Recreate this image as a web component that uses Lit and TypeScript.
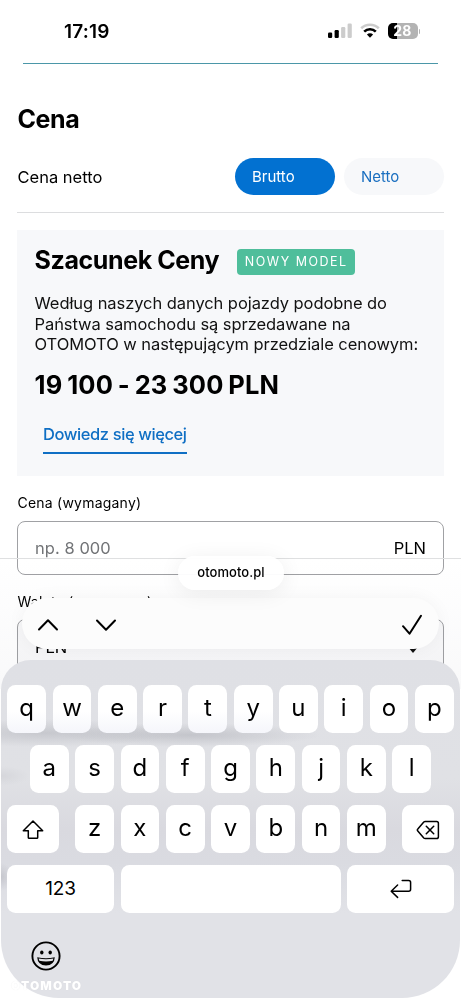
import { LitElement, html, svg, css } from "lit";
import { customElement, state } from "lit/decorators.js";
import { classMap } from "lit/directives/class-map.js";

@customElement("status-bar")
class StatusBar extends LitElement {
  static styles = css`
    :host { display: flex; justify-content: space-between; align-items: center; height: 63px; padding: 0 41px 0 64px; box-sizing: border-box; }
    .time { font-weight: 600; font-size: 19px; letter-spacing: 0.2px; line-height: 22px; }
    .icons { display: flex; align-items: center; gap: 8px; margin-top: -1px; }
    svg { display: block; }
    .battery { display: flex; align-items: center; gap: 1px; }
    .cell { width: 30px; height: 16px; border-radius: 5px; background: linear-gradient(to right, #000 9px, #b3b3b3 9px); color: #fff; font-size: 14px; font-weight: 700; line-height: 16.5px; text-align: center; letter-spacing: 0.2px; }
    .nub { width: 1.5px; height: 5px; border-radius: 0 2px 2px 0; background: #b3b3b3; }
  `;
  render() {
    return html`
      <span class="time">17:19</span>
      <div class="icons">
        <svg width="24" height="16" viewBox="0 0 24 16">
          <rect x="0" y="9.5" width="4.2" height="5.5" rx="1.2" />
          <rect x="6.6" y="7" width="4.2" height="8" rx="1.2" />
          <rect x="13.1" y="4" width="4.2" height="11" rx="1.2" fill="#ccc" />
          <rect x="19.6" y="0.5" width="4.2" height="14.5" rx="1.2" fill="#ccc" />
        </svg>
        <svg width="20" height="16" viewBox="0 0 20 16" fill="none">
          <path d="M1.2 5.3a12.6 12.6 0 0 1 17.6 0" stroke="#ccc" stroke-width="2.6" />
          <path d="M4.2 8.6a8.3 8.3 0 0 1 11.6 0" stroke="#000" stroke-width="2.6" />
          <path d="M6.9 11.5a4.4 4.4 0 0 1 6.2 0L10 14.8z" fill="#000" />
        </svg>
        <div class="battery"><div class="cell">28</div><div class="nub"></div></div>
      </div>`;
  }
}

@customElement("price-estimate")
class PriceEstimate extends LitElement {
  static styles = css`
    :host { display: block; height: 246px; padding: 14px 17.5px 0; box-sizing: border-box; background: #f7f8fa; }
    .head { display: flex; align-items: center; gap: 18px; height: 32px; }
    h2 { margin: 0; font-size: 25px; line-height: 30px; font-weight: 700; letter-spacing: -0.4px; white-space: nowrap; }
    .badge { margin-top: 3px; width: 118px; height: 26px; box-sizing: border-box; border-radius: 4px; background: #4fbe9b; color: #fff; font-size: 12.5px; line-height: 26px; letter-spacing: 1.5px; text-align: center; white-space: nowrap; }
    p { margin: 17px 0 0; font-size: 16.5px; line-height: 20.5px; color: #111; letter-spacing: -0.07px; white-space: nowrap; }
    .range { margin-top: 14px; font-size: 25.5px; line-height: 31px; font-weight: 700; letter-spacing: 0.15px; word-spacing: -1.4px; white-space: nowrap; }
    .link { display: inline-block; margin: 24px 0 0 8.5px; width: 144px; height: 30px; box-sizing: border-box; border-bottom: 2px solid #0f6fc4; color: #0f6fc4; font-size: 16.5px; line-height: 21px; font-weight: 500; letter-spacing: -0.41px; white-space: nowrap; }
  `;
  render() {
    return html`
      <div class="head"><h2>Szacunek Ceny</h2><span class="badge">NOWY MODEL</span></div>
      <p>
        Według naszych danych pojazdy podobne do<br />
        Państwa samochodu są sprzedawane na<br />
        OTOMOTO w następującym przedziale cenowym:
      </p>
      <div class="range">19 100 - 23 300 PLN</div>
      <a class="link">Dowiedz się więcej</a>`;
  }
}

const shiftIcon = svg`<svg width="24" height="22" viewBox="0 0 24 22"><path d="M12 2 2.3 11.8h5v6.6q0 .8.8.8h7.8q.8 0 .8-.8v-6.6h5z"/></svg>`;
const deleteIcon = svg`<svg width="24" height="20" viewBox="0 0 24 20"><path d="M9.2 1.4h11.4q1.8 0 1.8 1.8v13.6q0 1.8-1.8 1.8H9.2q-.8 0-1.4-.6L1.8 11q-.9-1 0-2l6-7q.6-.6 1.4-.6zM10.3 6.3l7.4 7.4M17.7 6.3l-7.4 7.4"/></svg>`;
const returnIcon = svg`<svg width="24" height="20" viewBox="0 0 24 20"><path d="M13.2 1.6h6.4q2 0 2 2v6.6q0 2-2 2H2.2M8.6 6l-6.4 6.2 6.4 6.2"/></svg>`;

@customElement("touch-keyboard")
class TouchKeyboard extends LitElement {
  static styles = css`
    :host { display: flex; flex-direction: column; gap: 12px; box-sizing: border-box; padding: 25px 6px 0; border-radius: 30px 30px 58px 58px; overflow: hidden; color: #000;
      background:
        radial-gradient(ellipse 130px 14px at 45px 73px, rgba(120,122,132,.24), transparent),
        radial-gradient(ellipse 130px 12px at 190px 75px, rgba(120,122,132,.27), transparent),
        radial-gradient(ellipse 28px 10px at 0 116px, rgba(150,150,160,.15), transparent),
        radial-gradient(ellipse 12px 14px at 0 217px, rgba(120,120,130,.22), transparent),
        linear-gradient(#dfe0e5, #e0e1e5 35%, #d9d9df 50%, #dadbe1 60%, #e1e2e7 75%); }
    .row { display: flex; justify-content: center; gap: 6.5px; }
    .key { width: 38.8px; height: 48px; border-radius: 8.5px; background: #fff; display: flex; align-items: center; justify-content: center; font-size: 24px; line-height: 30px; padding-bottom: 3px; box-sizing: border-box; }
    .side { width: 52.3px; padding: 2px 0 0; }
    .wide { width: 107px; padding: 0; font-size: 19px; }
    .space { width: 220px; }
    .letters { display: flex; gap: 6.5px; margin: 0 9.3px; }
    .key svg { fill: none; stroke: #000; stroke-width: 1.5; stroke-linecap: round; stroke-linejoin: round; }
    .num { font-size: 19px; letter-spacing: -0.2px; padding-bottom: 1px; }
    .shade { background: linear-gradient(#fff 55%, #f5f6fb); }
    .foot { padding: 16px 0 0 23.5px; }
    .foot svg { display: block; }
  `;
  keys(letters: string, shaded = 0) {
    return [...letters].map((l, i) => html`<div class=${classMap({ key: true, shade: i < shaded })}>${l}</div>`);
  }
  render() {
    return html`
      <div class="row">${this.keys("qwertyuiop", 6)}</div>
      <div class="row">${this.keys("asdfghjkl")}</div>
      <div class="row">
        <div class="key side">${shiftIcon}</div>
        <div class="letters">${this.keys("zxcvbnm")}</div>
        <div class="key side">${deleteIcon}</div>
      </div>
      <div class="row">
        <div class="key wide num">123</div>
        <div class="key space"></div>
        <div class="key wide">${returnIcon}</div>
      </div>
      <div class="foot">
        <svg width="30" height="30" viewBox="0 0 30 30">
          <circle cx="15" cy="15" r="13.6" fill="none" stroke="#000" stroke-width="1.9" />
          <ellipse cx="10.8" cy="11.6" rx="1.7" ry="2" /><ellipse cx="19.2" cy="11.6" rx="1.7" ry="2" />
          <path d="M6.2 16.2q8.8 2 17.6 0-.5 8.2-8.8 8.2t-8.8-8.2z" />
          <path d="M7.6 17.6q7.4 1.5 14.8 0l-.7 2.2q-6.7 1.5-13.4 0z" fill="#e1e2e7" />
        </svg>
      </div>`;
  }
}

@customElement("app-root")
class AppRoot extends LitElement {
  static styles = css`
    :host { display: block; position: relative; width: 461px; height: 999px; overflow: hidden; background: #fff; color: #000; font-family: Inter, "Liberation Sans", sans-serif; }
    .topline { height: 1px; margin: 0 23px; background: #4b97a8; }
    main { padding: 40px 17px 0; }
    h1 { margin: 0 0 0 0.5px; font-size: 25px; line-height: 30px; font-weight: 700; letter-spacing: -0.4px; }
    .tax { display: flex; align-items: center; height: 37px; margin-top: 24px; padding-bottom: 17px; border-bottom: 1px solid #dcdddf; font-size: 16.5px; }
    .tax .name { flex: 1; padding-left: 0.5px; }
    .opt { width: 100px; height: 37px; line-height: 37px; box-sizing: border-box; padding-left: 17px; border-radius: 18.5px; margin-left: 9px; font-size: 15px; background: #f7f8fa; color: #1a6fc0; }
    .opt.on { background: #0271d1; color: #fff; }
    price-estimate { margin-top: 17px; }
    .label { font-size: 14px; line-height: 18px; letter-spacing: 0.22px; padding-left: 0.5px; white-space: nowrap; }
    .first { margin-top: 18px; }
    .field { display: flex; justify-content: space-between; align-items: center; height: 54px; box-sizing: border-box; border: 1px solid #a0a1a4; border-radius: 8px; padding: 0 17px; font-size: 16.5px; }
    .first + .field { margin-top: 8.5px; }
    .second { margin-top: 18px; }
    .second + .field { margin-top: 8.5px; padding-top: 1px; background: #f9f9fa; }
    .hint { color: #727477; letter-spacing: 0.05px; }
    .caret { width: 0; border: 5px solid transparent; border-top: 6px solid #111; border-bottom: 0; margin-right: 8px; margin-top: 6px; }
    .haze { position: absolute; left: 0; right: 0; top: 559px; height: 130px; mix-blend-mode: multiply; background: linear-gradient(#fff, #f9f9fa); }
    .edge { position: absolute; left: 0; right: 0; top: 558px; height: 1px; background: #dfe0e1; }
    .site { position: absolute; left: 178px; top: 556px; width: 106px; height: 34px; border-radius: 17px; background: rgba(255,255,255,.96); box-shadow: 0 3px 22px rgba(0,0,0,.07); font-size: 13px; font-weight: 500; line-height: 33px; text-align: center; letter-spacing: .05px; }
    .tools { position: absolute; left: 22px; top: 598px; width: 417px; height: 51px; box-sizing: border-box; border-radius: 26px; background: #fcfcfc; box-shadow: 0 0 18px rgba(0,0,0,.045); display: flex; align-items: center; padding: 2px 15px 0 14px; }
    .tools svg { fill: none; stroke: #000; stroke-width: 2; stroke-linecap: round; stroke-linejoin: round; }
    .tools .down { margin-left: 34px; }
    .tools .done { margin-left: auto; }
    touch-keyboard { position: absolute; left: 1px; top: 660px; width: 459px; height: 338px; }
    .mark { position: absolute; left: 11px; top: 978px; color: #fff; font-size: 12px; line-height: 15px; font-weight: 900; letter-spacing: 1.1px; text-shadow: 0 0 1px rgba(0,0,0,.08); }
  `;
  @state() private mode = "Brutto";
  render() {
    return html`
      <status-bar></status-bar>
      <div class="topline"></div>
      <main>
        <h1>Cena</h1>
        <div class="tax">
          <span class="name">Cena netto</span>
          ${["Brutto", "Netto"].map((m) => html`<span class=${classMap({ opt: true, on: m === this.mode })} @click=${() => (this.mode = m)}>${m}</span>`)}
        </div>
        <price-estimate></price-estimate>
        <div class="label first">Cena (wymagany)</div>
        <div class="field"><span class="hint">np. 8 000</span><span>PLN</span></div>
        <div class="label second">Waluta (wymagany)</div>
        <div class="field"><span>PLN</span><span class="caret"></span></div>
      </main>
      <div class="haze"></div>
      <div class="edge"></div>
      <div class="tools">
        <svg width="24" height="24" viewBox="0 0 24 24"><path d="M3 16.5 12 7.2l9 9.3" /></svg>
        <svg class="down" width="24" height="24" viewBox="0 0 24 24"><path d="M3 7.5l9 9.3 9-9.3" /></svg>
        <svg class="done" width="24" height="24" viewBox="0 0 24 24"><path d="M3 13.2l6.5 7.5L21 2.8" /></svg>
      </div>
      <div class="site">otomoto.pl</div>
      <touch-keyboard></touch-keyboard>
      <div class="mark">OTOMOTO</div>`;
  }
}
